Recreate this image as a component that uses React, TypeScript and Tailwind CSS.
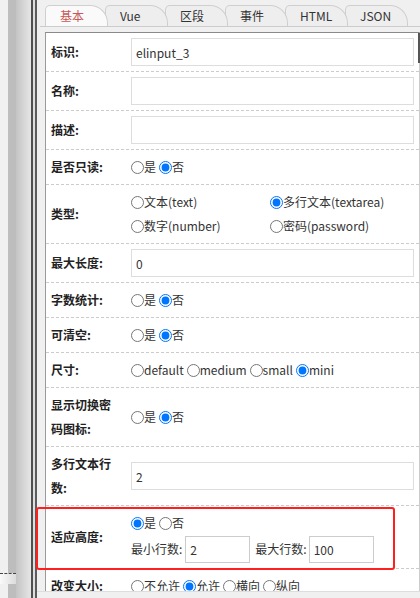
import type { ReactNode } from 'react';
import clsx from 'clsx';

const tabs = ['基本', 'Vue', '区段', '事件', 'HTML', 'JSON'];

function Row({ label, children, className }: { label: ReactNode; children?: ReactNode; className?: string }) {
  return (
    <div className={clsx('relative flex shrink-0 items-center border-b border-dashed border-[#cccccc]', className)}>
      <div className="w-[85px] shrink-0 pl-[5px] pr-[12px] text-[12px] font-bold leading-[24px] text-[#222]">{label}</div>
      <div className="min-w-0 flex-1 pr-[5px]">{children}</div>
    </div>
  );
}

function Radio({ name, label, checked }: { name: string; label: string; checked?: boolean }) {
  return (
    <label className="mr-[3px] inline-flex h-[24px] items-center align-top">
      <input type="radio" name={name} defaultChecked={checked} className="m-0 h-[13px] w-[13px]" />
      <span>{label}</span>
    </label>
  );
}

function TextInput({ value }: { value?: string }) {
  return (
    <input
      type="text"
      defaultValue={value}
      className="block h-[28px] w-full border border-[#dddddd] bg-white px-[4px] text-[12px] text-[#333] outline-none"
    />
  );
}

function YesNo({ name, yes }: { name: string; yes?: boolean }) {
  return (
    <div className="flex h-[24px]">
      <Radio name={name} label="是" checked={yes} />
      <Radio name={name} label="否" checked={!yes} />
    </div>
  );
}

export default function App() {
  return (
    <div className="relative flex h-[598px] w-[420px] overflow-hidden bg-[#f0f0f0] font-['Noto_Sans_CJK_SC',sans-serif] text-[12px] text-[#333]">
      {/* 左侧分隔条 */}
      <div className="flex w-[37px] shrink-0">
        <div className="w-[8px] bg-[#f0f0f0]" />
        <div className="w-[8px] bg-[#bdbdbd]" />
        <div className="w-[15px] bg-gradient-to-r from-[#c4c4c4] to-[#e6e6e6]" />
        <div className="w-[2px] bg-[#505050]" />
        <div className="w-[2px] bg-[#dedede]" />
        <div className="w-[2px] bg-[#5c5c5c]" />
      </div>
      <div className="absolute left-0 top-[573px] h-[11px] w-[16px] border-t border-dashed border-[#444] bg-gradient-to-r from-[#fafafa] to-[#dcdcdc]" />

      <div className="flex min-w-0 flex-1 flex-col">
        {/* 标签页 */}
        <div className="ml-[3px] flex h-[21px] shrink-0 items-end border-b border-[#cccccc] pl-[5px] pt-[5px] box-content">
          {tabs.map((tab, i) => (
            <div
              key={tab}
              style={{ zIndex: tabs.length - i }}
              className={clsx(
                'relative -mr-[3px] flex h-[21px] w-[63px] shrink-0 items-center rounded-tl-[5px] rounded-tr-[18px] border border-b-0 border-[#cfcfcf] pl-[14px] text-[12px] leading-none',
                i === 0 ? 'bg-[#fafafa] text-[#c95858]' : 'bg-[#eeeeee] text-[#333]'
              )}
            >
              {tab}
            </div>
          ))}
        </div>

        {/* 属性面板 */}
        <div className="relative ml-[8px] mt-[5px] flex min-h-0 flex-1 flex-col border-l border-t border-r border-l-[#9a9a9a] border-t-[#8a8a8a] border-r-[#cccccc] bg-white overflow-y-clip overflow-x-visible">
          <div className="absolute right-[-1px] top-0 z-10 h-[30px] w-[2px] bg-[#555]" />

          <Row label="标识:" className="h-[39px]">
            <TextInput value="elinput_3" />
          </Row>
          <Row label="名称:" className="h-[39px]">
            <TextInput />
          </Row>
          <Row label="描述:" className="h-[39px]">
            <TextInput />
          </Row>
          <Row label="是否只读:" className="h-[35px]">
            <YesNo name="readonly" />
          </Row>
          <Row label="类型:" className="h-[59px]">
            <div className="grid grid-cols-[139px_1fr]">
              <div><Radio name="type" label="文本(text)" /></div>
              <div><Radio name="type" label="多行文本(textarea)" checked /></div>
              <div><Radio name="type" label="数字(number)" /></div>
              <div><Radio name="type" label="密码(password)" /></div>
            </div>
          </Row>
          <Row label="最大长度:" className="h-[39px]">
            <TextInput value="0" />
          </Row>
          <Row label="字数统计:" className="h-[35px]">
            <YesNo name="wordlimit" />
          </Row>
          <Row label="可清空:" className="h-[35px]">
            <YesNo name="clearable" />
          </Row>
          <Row label="尺寸:" className="h-[35px]">
            <div className="flex h-[24px]">
              <Radio name="size" label="default" />
              <Radio name="size" label="medium" />
              <Radio name="size" label="small" />
              <Radio name="size" label="mini" checked />
            </div>
          </Row>
          <Row label="显示切换密码图标:" className="h-[59px]">
            <YesNo name="showpassword" />
          </Row>
          <Row label="多行文本行数:" className="h-[59px]">
            <TextInput value="2" />
          </Row>
          <Row label="适应高度:" className="h-[63px]">
            <YesNo name="autosize" yes />
            <div className="flex h-[28px] items-center">
              <span>最小行数:</span>
              <input
                type="text"
                defaultValue="2"
                className="ml-[3px] h-[27px] w-[65px] border border-[#cccccc] bg-white px-[4px] text-[12px] text-[#333] outline-none"
              />
              <span className="ml-[5px]">最大行数:</span>
              <input
                type="text"
                defaultValue="100"
                className="ml-[2px] h-[27px] w-[65px] border border-[#cccccc] bg-white px-[4px] text-[12px] text-[#333] outline-none"
              />
            </div>
            <div className="pointer-events-none absolute -bottom-[2px] -left-[10px] right-[24px] top-[1px] rounded-[3px] border-2 border-[#ff1f1f]" />
          </Row>
          <Row label="改变大小:" className="h-[35px]">
            <div className="flex h-[24px]">
              <Radio name="resize" label="不允许" />
              <Radio name="resize" label="允许" checked />
              <Radio name="resize" label="横向" />
              <Radio name="resize" label="纵向" />
            </div>
          </Row>
        </div>
        <div className="h-[6px] shrink-0 border-t border-[#dddddd] bg-[#f0f0f0] box-content" />
      </div>
    </div>
  );
}
